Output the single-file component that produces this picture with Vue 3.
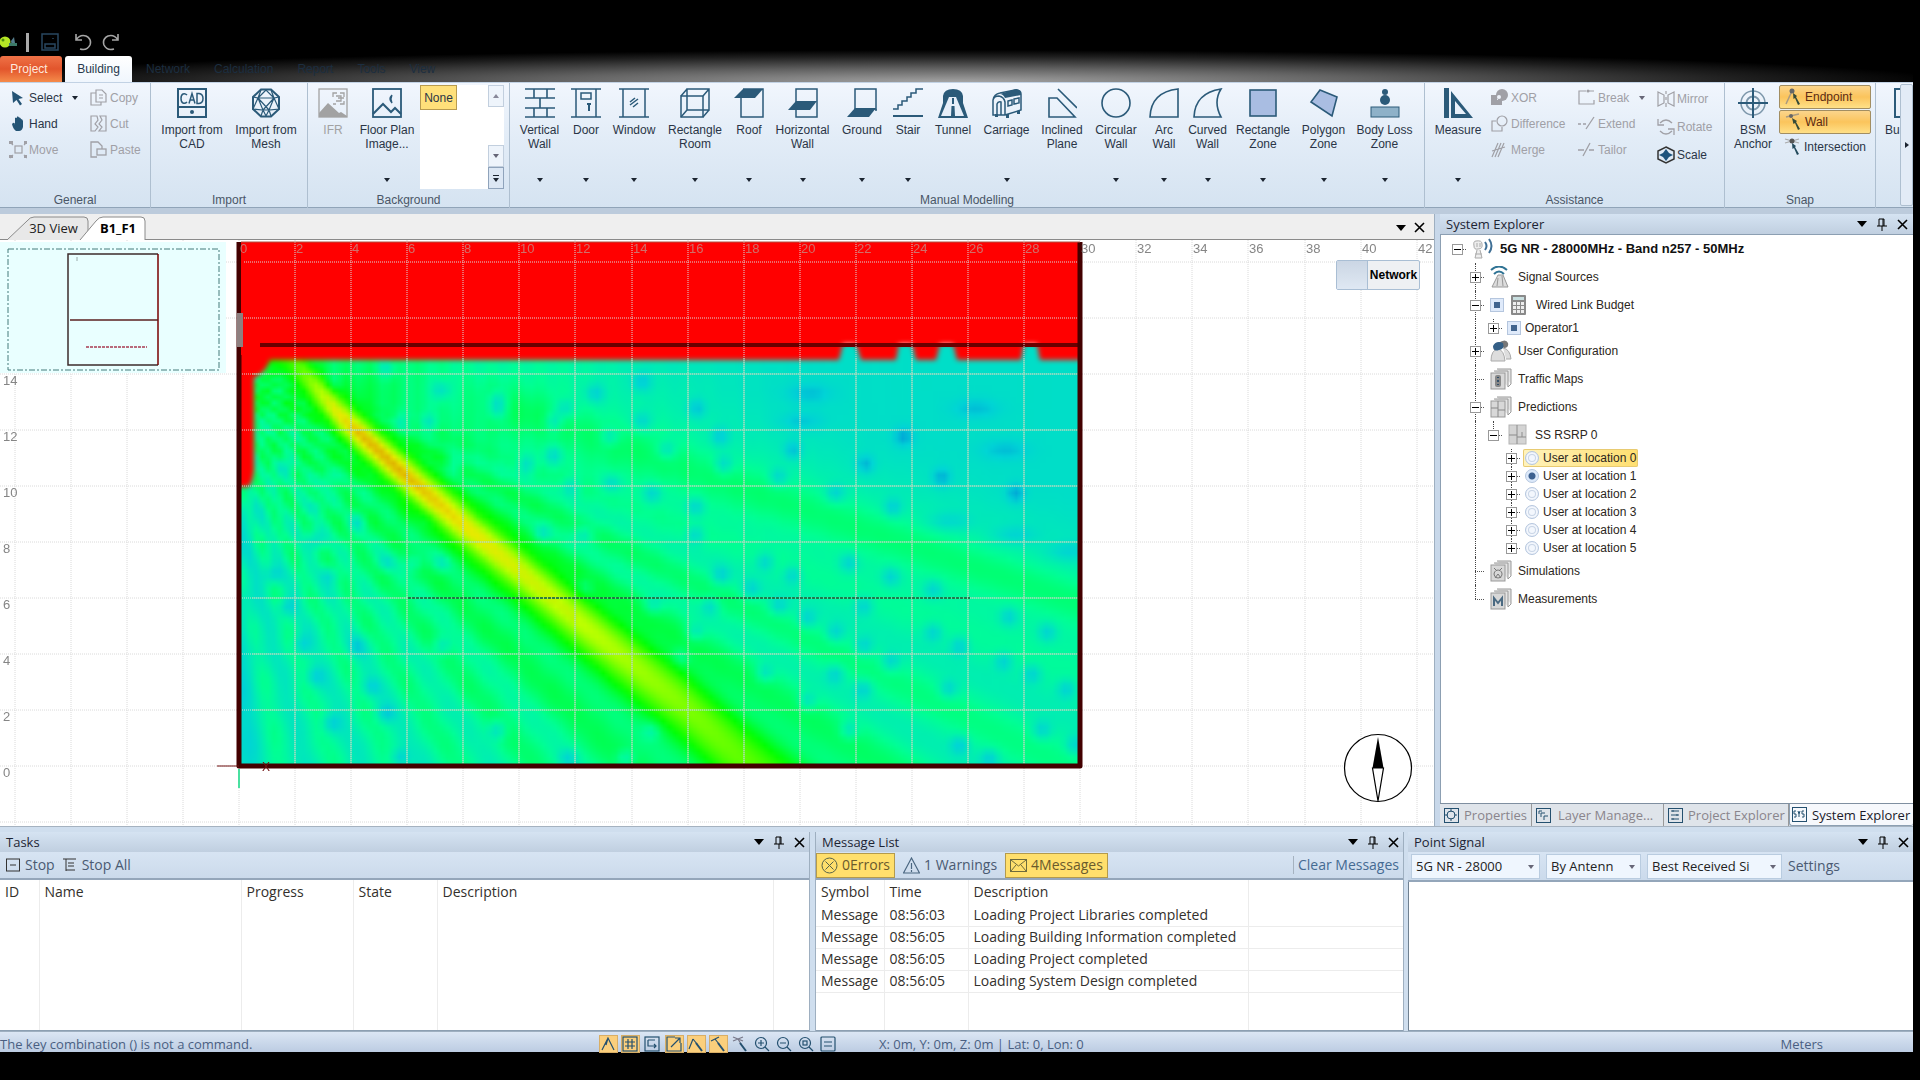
<script setup>
import { ref, onMounted } from 'vue'

const S = (inner, w = 1.5) => `<g fill="none" stroke="currentColor" stroke-width="${w}">${inner}</g>`

/* 30 x 30 ribbon icons */
const big = {
  cad: S('<rect x="1" y="1" width="28" height="28" stroke-width="2"/><path d="M1 19H29" stroke-width="2"/><path d="M10 7Q8 5 6 6Q4 7 4 10.500Q4 14 6 15Q8 16 10 14M12 15.500L15 5.500L18 15.500M13 12H17M20 5.500V15.500H22Q26 15 26 10.500Q26 6 22 5.500Z"/>') + '<circle cx="15" cy="24" r="2" fill="currentColor"/>',
  mesh: S('<path d="M10 1.500H20L28 9V21L20 28.500H10L2 21V9Z" stroke-width="2"/><path d="M15 2L7 10L23 10ZM7 10L2 21L12 22L7 10M23 10L28 21L18 22L23 10M7 10L18 22H12L23 10M12 22L10 28M18 22L20 28M12 22L15 28L18 22M2 9L7 10L10 2M28 9L23 10L20 2" stroke-width="1.200"/>'),
  ifr: S('<rect x="1" y="1" width="28" height="28"/><path d="M15 9V5H19M22 5H26V9M26 13V16H22M18 16H15M18 8H23V13H18M20 10H26"/>', 1.3) + '<path d="M1 29V25L10 15L21 25L23 24L29 28V29Z" fill="currentColor"/>',
  plan: S('<rect x="1" y="1" width="28" height="28" stroke-width="1.800"/><path d="M1 26L11 16L19 24L23 20L29 26" stroke-width="2"/><path d="M20 7Q16 11 20 15Q18 11 20 7" stroke-width="1.300"/>'),
  vwall: S('<path d="M0 1H30M0 10H30M0 20H30M0 29H30M9 1V10M22 1V10M15 10V20M9 20V29M22 20V29" stroke-width="1.600"/>'),
  door: S('<path d="M0 1H30M0 29H30M5 1V29M25 1V29"/><rect x="10" y="5" width="10" height="6"/><path d="M16 16H20M18 16V23" stroke-width="2"/>'),
  window: S('<path d="M0 1H30M0 29H30M4 1V29M26 1V29M11 17L19 11M11 14L16 10M14 19L19 15"/>'),
  room: S('<rect x="1" y="8" width="22" height="21"/><path d="M7 1H29V22H7ZM1 8L7 1M23 8L29 1M1 29L7 22M23 29L29 22"/>'),
  roof: S('<path d="M7 8V29H29V1H9"/>') + '<path d="M9 1H29L21 10H0Z" fill="currentColor"/>',
  hwall: S('<rect x="8" y="1" width="21" height="28"/>') + '<path d="M8 13H29L22 22H0Z" fill="currentColor"/>',
  ground: S('<rect x="8" y="1" width="21" height="20"/><path d="M29 21V23"/>') + '<path d="M8 20H29L22 29H0Z" fill="currentColor"/>',
  stair: S('<path d="M0 21H5V17H9V13H14V9H18V5H23V1H30"/><path d="M0 28H30" stroke-width="2"/>'),
  tunnel: '<path d="M5 15V8Q6 1 15 1Q24 1 25 8V15L30 30H0Z" fill="currentColor"/><path d="M11 9H18L26 28H3Z" fill="#e6eef8"/><path d="M14 10H16V16H14ZM13.500 18H16.500L17 28H13Z" fill="currentColor"/>',
  carriage: S('<path d="M1 27V12Q2 8 7 8Q12 9 13 14V27ZM1 12Q2 6 8 5L23 2Q29 2 29 6V22L13 27M5 27V16Q6 13 9 14V27M16 13L20 12V17L16 18ZM22 11L27 10V15L22 16Z"/>') + '<path d="M8 6L24 1Q29 1 29 7L13 10Q11 6 8 6ZM3 26H6V29H3ZM14 26H17V30H14ZM25 23H28V26H25Z" fill="currentColor"/>',
  inclined: S('<path d="M2 10H10L28 29H2ZM11 1L30 20"/>', 1.6),
  circle: S('<circle cx="15" cy="15" r="14"/>', 1.6),
  arc: S('<path d="M29 1V29H1Q2 4 29 1Z"/>', 1.6),
  curved: S('<path d="M28 1Q20 14 28 29H1Q2 5 28 1Z"/>', 1.6),
  rect: '<rect x="2" y="2" width="26" height="26" fill="#a9bde2" stroke="currentColor" stroke-width="1.600"/>',
  polygon: '<path d="M11 2L28 9L23 28L2 14Z" fill="#a9bde2" stroke="currentColor" stroke-width="1.600"/>',
  body: '<circle cx="15" cy="4" r="3" fill="currentColor"/><circle cx="15" cy="12" r="5" fill="currentColor"/><rect x="1" y="19" width="28" height="10" fill="#8eb1c8" stroke="currentColor"/>',
  measure: '<rect x="1" y="0" width="5" height="30" fill="currentColor"/><path fill-rule="evenodd" d="M8 3L30 30H8ZM12 13V26H23Z" fill="currentColor"/>',
  bsm: S('<circle cx="15" cy="15" r="12" stroke="#7d97ab"/><circle cx="15" cy="15" r="6.500" stroke="#7d97ab" stroke-width="2"/><path d="M15 0V30M0 15H30" stroke-width="2"/>'),
  building: S('<path d="M16 1H2V29H16M8 10H11M8 23H11" stroke-width="2"/>')
}

/* 18 x 18 command icons */
const small = {
  select: '<path d="M3 2L14 9L9.500 10L13 15L11 16.500L7.500 11L4 14Z" fill="currentColor"/>',
  hand: '<path d="M4 8Q6 7 6 10V3Q7 2 8 3V1.500Q9.500 1 10 2.500Q11.500 2 12 4Q13.500 4 14 6V12Q13 16 10 16H7Q4 14 3 9Z" fill="currentColor"/>',
  move: S('<rect x="6" y="5" width="7" height="7"/><path d="M4 4L1 1M15 4L18 1M4 14L1 17M15 14L18 17"/>', 1.2) + '<path d="M0 0H4V3H0ZM15 0H18V3H15ZM0 14H4V17H0ZM15 14H18V17H15Z" fill="currentColor"/>',
  copy: S('<path d="M6 3V1H12L16 5V13H6ZM9 6H13M9 9H13M6 4H1V16H11V13"/>', 1.2),
  cut: S('<path d="M7 1H1V16H5L8 12L5 9L8 5ZM10 1H16V16H9L12 12L9 9L12 5Z"/>', 1.2),
  paste: S('<path d="M7 16H1V1H8L12 5V8"/><rect x="7" y="8" width="9" height="6"/>', 1.3),
  xor: '<circle cx="11" cy="6" r="6" fill="currentColor"/><path d="M0 6H6V11H11V16H0Z" fill="currentColor"/><circle cx="8" cy="8" r="2" fill="#eef3fb"/>',
  diff: S('<path d="M5 6H1V16H11V12"/><circle cx="11" cy="6" r="5"/>', 1.2),
  merge: S('<path d="M1 16L7 2M4 16L10 2M7 16L13 2M1 10L14 6" stroke-width="1.200"/>'),
  break: S('<path d="M8 2H1V15H16V11M11 2H16"/>', 1.2) + '<circle cx="10" cy="2" r="1.500" fill="currentColor"/>',
  extend: S('<path d="M0 9H3M5 9H8M8 14L16 2"/>', 1.3),
  tailor: S('<path d="M0 9H6M5 15L12 2M11 9H16"/>', 1.3),
  mirror: S('<path d="M1 2L7 5V13L1 16ZM17 2L11 5V13L17 16ZM9 1V4M9 7V10M9 13V17" stroke-width="1.200"/>'),
  rotate: S('<path d="M15 5Q9 -1 3 5M1 1V7H7M3 13Q9 19 15 13M17 17V11H11" stroke-width="1.300"/>'),
  scale: S('<path d="M9 1L17 5V13L9 17L1 13V5Z" stroke="#333"/>') + '<path d="M9 3L12 7L16 9L12 11L9 15L6 11L2 9L6 7Z" fill="#1d537d"/>',
  endpoint: '<path d="M7 3L1 16" stroke="#a99a80" stroke-width="1.500"/><circle cx="7" cy="3" r="2.500" fill="#666"/><path d="M8 5L12 8L11 9L15 16L13 17L10 10L8.500 11Z" fill="#354a38"/>',
  wall: '<path d="M1 4L14 1" stroke="#a99a80" stroke-width="1.500"/><circle cx="6" cy="3" r="2" fill="#666"/><path d="M7 5L12 8L11 9L15 16L13 17L10 10L8.500 11Z" fill="#354a38"/>',
  inter: '<path d="M1 5L15 1M1 1L15 5" stroke="#aaa" stroke-width="1.300"/><circle cx="8" cy="3" r="2.500" fill="#555"/><path d="M8 5L12 8L11 9L15 16L13 17L10 10L8.500 11Z" fill="#234a5c"/>'
}

const modelling = [
  ['vwall', 'Vertical Wall', 1], ['door', 'Door', 1], ['window', 'Window', 1], ['room', 'Rectangle Room', 1],
  ['roof', 'Roof', 1], ['hwall', 'Horizontal Wall', 1], ['ground', 'Ground', 1], ['stair', 'Stair', 1],
  ['tunnel', 'Tunnel', 0], ['carriage', 'Carriage', 1], ['inclined', 'Inclined Plane', 0], ['circle', 'Circular Wall', 1],
  ['arc', 'Arc Wall', 1], ['curved', 'Curved Wall', 1], ['rect', 'Rectangle Zone', 1], ['polygon', 'Polygon Zone', 1],
  ['body', 'Body Loss Zone', 1]
]

/* 22 x 22 tree icons */
const sheet = '<path d="M7 1H21V16M4 3H18V19M18 19L21 16" fill="#e4e4e4" stroke="#999"/><rect x="1" y="5" width="14" height="16" fill="#d8d8d8" stroke="#999"/>'
const treeIcons = {
  net: '<path d="M4 3Q1 3 2 8Q2 12 6 11Q11 11 10 6Q10 2 4 3ZM5 5V9M8 5V9M5 12L3 20H10L8 12M3 16H10" fill="#eee" stroke="#aaa"/><path d="M13 4Q16 8 13 12M17 1Q22 8 17 15" fill="none" stroke="#3f6f95" stroke-width="2"/>',
  signal: '<path d="M8 9L2 21H18L13 9Z" fill="#ddd" stroke="#999"/><path d="M12 10L13 20M8 12L7 20" stroke="#999"/><path d="M1 4Q9 -3 17 4M4 8Q9 3 14 8" fill="none" stroke="#2f7394" stroke-width="2"/>',
  calc: '<rect x="2" y="1" width="15" height="20" rx="1" fill="#8a8a8a"/><rect x="4" y="3" width="11" height="3" fill="#c9dfe0"/><path d="M4 8H7V11H4ZM8 8H11V11H8ZM12 8H15V11H12ZM4 12H7V15H4ZM8 12H11V15H8ZM12 12H15V15H12ZM4 16H7V19H4ZM8 16H11V19H8ZM12 16H15V19H12Z" fill="#eee"/>',
  user: '<path d="M1 21Q1 10 8 9Q14 10 15 21ZM13 8Q20 9 21 19H16" fill="#ddd" stroke="#aaa"/><path d="M8 3Q16 -2 18 3Q19 8 14 8Z" fill="#777"/><path d="M3 6Q6 0 13 3Q15 9 9 10Q3 12 3 6Z" fill="#345f86"/>',
  traffic: sheet + '<rect x="5" y="7" width="6" height="12" rx="2" fill="#888"/><path d="M8 9V10M8 12V14M8 16V17" stroke="#334f68" stroke-width="2"/>',
  pred: sheet + '<path d="M8 5V12H1M8 14H15M8 12V21" fill="none" stroke="#888"/>',
  ss: '<rect x="1" y="1" width="17" height="19" fill="#d4d4d4" stroke="#b4b4b4"/><path d="M9 1V20M1 11H9M9 13H18M14 13V8" stroke="#8c8c8c" fill="none"/>',
  sim: sheet + '<path d="M4 8L7 11M12 8L9 11M8 10A4 4 0 1 0 8.100 10M8 14L5 18M8 14L11 18" fill="none" stroke="#777"/>',
  meas: sheet + '<path d="M4 18V10L8 15L12 10V18" fill="none" stroke="#4b6a82" stroke-width="2"/>'
}

/* l: depth; own: connector line above (u) and below (d) the node */
const tree = [
  { l: 0, box: '-', icon: 'net', text: '5G NR - 28000MHz - Band n257 - 50MHz', bold: true, own: '' },
  { l: 1, box: '+', icon: 'signal', text: 'Signal Sources', own: 'ud' },
  { l: 1, box: '-', check: true, icon: 'calc', text: 'Wired Link Budget', own: 'ud' },
  { l: 2, box: '+', check: true, text: 'Operator1', own: 'u', tight: true },
  { l: 1, box: '+', icon: 'user', text: 'User Configuration', own: 'ud' },
  { l: 1, icon: 'traffic', text: 'Traffic Maps', own: 'ud' },
  { l: 1, box: '-', icon: 'pred', text: 'Predictions', own: 'ud' },
  { l: 2, box: '-', icon: 'ss', text: 'SS RSRP 0', own: 'u' },
  ...[0, 1, 2, 3, 4, 5].map(n => ({ l: 3, box: '+', radio: n, text: `User at location ${n}`, own: n < 5 ? 'ud' : 'u', tight: true })),
  { l: 1, icon: 'sim', text: 'Simulations', own: 'ud' },
  { l: 1, icon: 'meas', text: 'Measurements', own: 'u' }
]
const shownLocation = ref(1)

const dockTabs = [
  ['Properties', '<circle cx="7" cy="7" r="4"/><path d="M7 1V4M7 10V13M1 7H4M10 7H13"/>'],
  ['Layer Manage...', '<path d="M3 6V3H6M5 9V5H9M8 12V8H12"/>'],
  ['Project Explorer', '<path d="M3 3H11M3 7H11M3 11H11M5 2V4M9 6V8M5 10V12"/>'],
  ['System Explorer', '<path d="M4 4H2V7H4V10H2M6 4L7 7L8 4M7 7V10M12 4H10V7H12V10H10"/>']
]

const messages = [
  ['08:56:03', 'Loading Project Libraries completed'],
  ['08:56:05', 'Loading Building Information completed'],
  ['08:56:05', 'Loading Project completed'],
  ['08:56:05', 'Loading System Design completed']
]

/* 16 x 16 status icons */
const statusIcons = [
  ['Angle snap', true, '<path d="M2 14L8 2L14 14M8 2L6 9" />'],
  ['Grid', true, '<rect x="1" y="1" width="14" height="14"/><path d="M6 3V13M10 3V13M3 6H13M3 10H13"/>'],
  ['Frame', false, '<rect x="1" y="1" width="14" height="14"/><path d="M4 4H11M4 4V10H12M10 8L12 10L10 12"/>'],
  ['Zoom window', true, '<path d="M9 1H1V15H15V7M5 11L14 2M9 2H14V7"/>'],
  ['Endpoint snap', true, '<path d="M1 13L5 3M5 3L9 8"/><path d="M8 7L14 15" stroke-width="2"/>'],
  ['Wall snap', true, '<path d="M1 5L9 1M5 3L9 8"/><path d="M8 7L14 15" stroke-width="2"/>'],
  ['Intersection snap', false, '<path d="M1 1L11 5M1 5L11 1M6 3L9 8" stroke="#778"/><path d="M8 7L14 15" stroke-width="2"/>'],
  ['Zoom in', false, '<circle cx="7" cy="7" r="5.500"/><path d="M11 11L15 15M4 7H10M7 4V10"/>'],
  ['Zoom out', false, '<circle cx="7" cy="7" r="5.500"/><path d="M11 11L15 15M4 7H10"/>'],
  ['Zoom fit', false, '<circle cx="7" cy="7" r="5.500"/><rect x="5" y="5" width="4" height="4"/><path d="M11 11L15 15"/>'],
  ['Legend', false, '<rect x="1" y="1" width="14" height="14" rx="1"/><path d="M4 6H12M4 10H12"/>']
]

/* plan view: 28 px per metre, origin at the lower left corner of the building */
const ORIGIN_X = 239
const ORIGIN_Y = 526
const STEP = 56
const columns = Array.from({ length: 26 }, (_, i) => (i - 4) * 2)
const rows = Array.from({ length: 11 }, (_, i) => (i - 1) * 2)
const gx = m => ORIGIN_X + Math.round(m * 28.04)
const gy = m => ORIGIN_Y - (m / 2) * STEP

const heat = ref(null)
const beam = [[241, 325], [293, 362], [340, 416], [395, 466], [460, 522], [515, 567], [581, 623], [636, 667], [685, 706], [740, 757], [1079, 1040]]
const peak = [[241, 135], [285, 112], [310, 88], [335, 62], [360, 49], [400, 48], [450, 56], [520, 68], [600, 77], [700, 92], [760, 100], [1079, 120]]
const nulls = [
  [750, 125], [1055, 160, 2], [1360, 205, 2], [850, 205], [665, 160], [610, 205], [590, 245], [487, 180], [487, 210], [310, 245], [1040, 245, 2],
  [750, 245], [693, 290], [893, 290], [1228, 290], [795, 330], [1025, 330], [1413, 330, 2], [900, 373], [1158, 373], [1000, 412], [1297, 412],
  [1103, 460], [1432, 460], [1208, 503], [1310, 545, 2], [1430, 585, 2], [1530, 635, 2], [181, 412], [848, 500], [567, 583], [645, 583], [848, 583],
  [232, 545], [410, 375], [540, 375], [105, 375], [285, 668], [336, 668], [387, 668], [181, 705], [1205, 710], [1128, 668], [975, 665], [895, 705],
  [1025, 705], [1282, 748], [950, 748], [875, 797], [1000, 797], [1155, 797], [1052, 835], [1103, 877], [1282, 877], [1490, 877], [1155, 918],
  [848, 877], [1330, 918], [1205, 965], [1103, 1002], [1462, 1002], [1155, 1047], [1052, 1083], [1525, 1047], [1128, 1170], [1330, 1215], [1385, 1255],
  [1480, 1170], [770, 1170], [720, 1255], [615, 1255], [487, 1170], [310, 1255], [285, 1120], [258, 1040], [232, 918], [130, 915], [80, 705],
  [105, 800], [155, 1010], [185, 1150], [387, 918], [1540, 1215], [1410, 965], [1420, 830], [1310, 1047], [820, 955], [770, 797], [645, 745], [975, 1000],
  [185, 130], [285, 85], [385, 150], [590, 345], [620, 440], [695, 430], [770, 460], [155, 500], [155, 600], [360, 250], [360, 540], [450, 540]
].map(([x, y, wide]) => [230 + x * 0.5485, 340 + y / 3, wide ? 22 : 9])

function along(points, x) {
  for (let i = 1; i < points.length; i++) {
    if (x <= points[i][0]) {
      const [x0, y0] = points[i - 1]
      const [x1, y1] = points[i]
      return y0 + ((y1 - y0) * (x - x0)) / (x1 - x0)
    }
  }
  return points[points.length - 1][1]
}
const ease = t => { const c = Math.max(0, Math.min(1, t)); return c * c * (3 - 2 * c) }

function hueAt(x, y) {
  const d = (y - along(beam, x)) * 0.77
  const r = Math.hypot(x - 250, y - 350)
  const a = Math.abs(d)
  let h
  if (d > 0) {
    const th = Math.atan2(y - 350, x - 195)
    h = 129 + 29 * (1 - Math.exp(-a / 75)) + 4 * ease((620 - x - (760 - y) * 0.4) / 320) * ease((a - 60) / 120)
    h += 8 * Math.cos(52 * th + 1) * ease(a / 30)
  } else {
    const th = Math.atan2(y - 352, x - 225)
    h = 127 + 33 * (1 - Math.exp(-a / 62))
    h += 14 * ease((x - 440) / 420) * ease((590 - y + (x - 1000) * 0.35) / 130)
    h += 8 * Math.cos(62 * th) * ease(a / 40) * ease((th - 0.28) / 0.2)
    h -= 13 * Math.exp(-(((y - 425 - (x - 560) * 0.34) / 24) ** 2)) * ease((x - 420) / 120)
  }
  h += 14 * Math.cos(r / 9 + x / 26) * Math.cos(x / 9 - y / 40) * Math.exp(-r / 190)
  h += 10 * Math.exp(-((x - 241) ** 2) / 400) * ease((y - 470) / 40)
  for (const [nx, ny, w] of nulls) {
    h += (w > 9 ? 13 : 20) * Math.exp(-((x - nx) ** 2) / (w * w) - ((y - ny) ** 2) / 85)
  }
  const halo = 0.9 * Math.exp(-((d / (15 + r * 0.025)) ** 2))
  h = h * (1 - halo) + 116 * halo
  const core = Math.exp(-((d / (10 + r * 0.018)) ** 2))
  return h * (1 - core) + along(peak, x) * core
}

onMounted(() => {
  const c = heat.value
  const ctx = c.getContext('2d')
  for (let j = 0; j < c.height; j++) {
    for (let i = 0; i < c.width; i++) {
      const h = Math.max(46, Math.min(194, hueAt(241 + ((i + 0.5) * 838) / c.width, 346 + ((j + 0.5) * 420) / c.height)))
      const l = h > 155 ? 50 - Math.min(8, (h - 155) * 0.34) : h < 75 ? 43 + (h - 46) * 0.2 : 50
      ctx.fillStyle = `hsl(${h} 100% ${l}%)`
      ctx.fillRect(i, j, 1, 1)
    }
  }
})
</script>

<template>
  <div class="app">
    <header class="title">
      <div class="quick">
        <svg class="logo" width="18" height="14" viewBox="0 0 18 14"><circle cx="5" cy="7" r="5.500" fill="#b6e625" /><circle cx="3" cy="5" r="1.500" fill="#4f8f10" /><path d="M11 6L14 2L15 8L12 11Z" fill="#557d8c" /><path d="M9 8H17V11H9Z" fill="#3c7a68" /></svg>
        <span class="divider"></span>
        <button aria-label="Save"><svg width="18" height="18" viewBox="0 0 18 18" fill="none" stroke="#294760" stroke-width="1.500"><rect x="1" y="1" width="16" height="16" /><path d="M4 11H14V15H4ZM12 5V6" /></svg></button>
        <button aria-label="Undo"><svg width="18" height="18" viewBox="0 0 18 18" fill="none" stroke="#a5a5a5" stroke-width="1.600"><path d="M2 1V7H8M2 7Q6 1 12 3Q18 6 16 12Q13 18 6 16" /></svg></button>
        <button aria-label="Redo"><svg width="18" height="18" viewBox="0 0 18 18" fill="none" stroke="#a5a5a5" stroke-width="1.600"><path d="M16 1V7H10M16 7Q12 1 6 3Q0 6 2 12Q5 18 12 16" /></svg></button>
      </div>
      <nav class="tabs">
        <button class="project">Project</button>
        <button class="current">Building</button>
        <button class="ghost">Network</button>
        <button class="ghost">Calculation</button>
        <button class="ghost">Report</button>
        <button class="ghost">Tools</button>
        <button class="ghost">View</button>
      </nav>
    </header>

    <section class="ribbon">
      <div class="group general">
        <div class="tools">
          <div class="stack">
            <button class="cmd"><svg width="18" height="18" v-html="small.select" />Select<i class="caret"></i></button>
            <button class="cmd"><svg width="18" height="18" v-html="small.hand" />Hand</button>
            <button class="cmd" disabled><svg width="18" height="18" v-html="small.move" />Move</button>
          </div>
          <div class="stack">
            <button class="cmd" disabled><svg width="18" height="18" v-html="small.copy" />Copy</button>
            <button class="cmd" disabled><svg width="18" height="18" v-html="small.cut" />Cut</button>
            <button class="cmd" disabled><svg width="18" height="18" v-html="small.paste" />Paste</button>
          </div>
        </div>
        <h2>General</h2>
      </div>

      <div class="group import">
        <div class="tools">
          <button class="tool"><svg width="30" height="30" v-html="big.cad" /><span>Import from CAD</span></button>
          <button class="tool"><svg width="30" height="30" v-html="big.mesh" /><span>Import from Mesh</span></button>
        </div>
        <h2>Import</h2>
      </div>

      <div class="group background">
        <div class="tools">
          <button class="tool ifr" disabled><svg width="30" height="30" v-html="big.ifr" /><span>IFR</span></button>
          <button class="tool plan"><svg width="30" height="30" v-html="big.plan" /><span>Floor Plan Image...</span><i class="caret"></i></button>
          <div class="gallery">
            <button class="none">None</button>
            <div class="scroller">
              <button aria-label="Scroll up"><i class="caret up"></i></button>
              <span></span>
              <button aria-label="Scroll down"><i class="caret dim"></i></button>
              <button aria-label="More" class="more"><i class="rule"></i><i class="caret"></i></button>
            </div>
          </div>
        </div>
        <h2>Background</h2>
      </div>

      <div class="group modelling">
        <div class="tools">
          <button v-for="[icon, text, menu] in modelling" :key="icon" class="tool">
            <svg width="30" height="30" v-html="big[icon]" /><span>{{ text }}</span><i v-if="menu" class="caret"></i>
          </button>
        </div>
        <h2>Manual Modelling</h2>
      </div>

      <div class="group assistance">
        <div class="tools">
          <button class="tool"><svg width="30" height="30" v-html="big.measure" /><span>Measure</span><i class="caret"></i></button>
          <div class="stack">
            <button class="cmd" disabled><svg width="18" height="18" v-html="small.xor" />XOR</button>
            <button class="cmd" disabled><svg width="18" height="18" v-html="small.diff" />Difference</button>
            <button class="cmd" disabled><svg width="18" height="18" v-html="small.merge" />Merge</button>
          </div>
          <div class="stack">
            <button class="cmd" disabled><svg width="18" height="18" v-html="small.break" />Break<i class="caret dim"></i></button>
            <button class="cmd" disabled><svg width="18" height="18" v-html="small.extend" />Extend</button>
            <button class="cmd" disabled><svg width="18" height="18" v-html="small.tailor" />Tailor</button>
          </div>
          <div class="stack tall">
            <button class="cmd" disabled><svg width="18" height="18" v-html="small.mirror" />Mirror</button>
            <button class="cmd" disabled><svg width="18" height="18" v-html="small.rotate" />Rotate</button>
            <button class="cmd"><svg width="18" height="18" v-html="small.scale" />Scale</button>
          </div>
        </div>
        <h2>Assistance</h2>
      </div>

      <div class="group snap">
        <div class="tools">
          <button class="tool"><svg width="30" height="30" v-html="big.bsm" /><span>BSM Anchor</span></button>
          <div class="snaps">
            <button class="cmd on"><svg width="18" height="18" v-html="small.endpoint" />Endpoint</button>
            <button class="cmd on"><svg width="18" height="18" v-html="small.wall" />Wall</button>
            <button class="cmd"><svg width="18" height="18" v-html="small.inter" />Intersection</button>
          </div>
        </div>
        <h2>Snap</h2>
      </div>

      <div class="group rest">
        <button class="tool"><svg width="16" height="30" v-html="big.building" /><span>Bu</span></button>
      </div>
      <button class="next" aria-label="Scroll ribbon"><i></i></button>
    </section>

    <main class="work">
      <section class="document">
        <div class="doctabs">
          <button class="doctab"><svg width="84" height="24"><path d="M1 24L21 5Q24 1 28 1H78Q82 1 82 5V24" fill="#e8e8e8" stroke="#8a8a8a" /></svg><span>3D View</span></button>
          <button class="doctab active"><svg width="68" height="24"><path d="M1 24L17 5Q20 1 24 1H62Q66 1 66 5V24" fill="#fff" stroke="#8a8a8a" /></svg><span>B1_F1</span></button>
          <div class="doctools">
            <button aria-label="Document list"><i class="arrow"></i></button>
            <button aria-label="Close document"><svg width="11" height="11"><path d="M1 1L10 10M10 1L1 10" stroke="#000" stroke-width="1.600" /></svg></button>
          </div>
        </div>
        <div class="viewport">
          <canvas ref="heat" class="heat" width="140" height="70"></canvas>
          <svg class="plan-view">
            <defs><filter id="soft" x="-5%" y="-5%" width="110%" height="110%"><feGaussianBlur stdDeviation="2.500" /></filter><clipPath id="inside"><rect x="239" y="2" width="841" height="524" /></clipPath></defs>
            <g clip-path="url(#inside)">
              <path filter="url(#soft)" fill="#f00" d="M220 -10H1090V120H1040L1037 104H1024L1021 120H957L953 104H940L936 120H916L912 104H899L896 120H861L856 104H843L839 120H270Q266 132 254 138V230Q252 247 247 247H220Z" />
              <path d="M260 105H1080" stroke="#6b0000" stroke-width="4" />
            </g>
            <g class="grid">
              <path v-for="m in columns" :key="'c' + m" :d="`M${gx(m)} 0V600`" />
              <path v-for="m in rows" :key="'r' + m" :d="`M0 ${gy(m)}H2400`" />
            </g>
            <g class="grid inner" clip-path="url(#inside)">
              <path v-for="m in columns" :key="'ic' + m" :d="`M${gx(m)} 118V526`" />
              <path v-for="m in rows.slice(0, 9)" :key="'ir' + m" :d="`M252 ${gy(m)}H1080`" />
            </g>
            <path d="M239 2V526H1080V2" fill="none" stroke="#430000" stroke-width="5" stroke-linejoin="round" />
            <path d="M242 2V115" stroke="#f00" stroke-width="2" />
            <path d="M241 2H1080" stroke="#b05040" />
            <rect x="237" y="73" width="6" height="34" fill="#8e8080" />
            <path d="M408 358H970" stroke="#0a5a30" stroke-width="1.500" stroke-dasharray="3 1" />
            <path d="M217 526H239" stroke="#701010" />
            <path d="M239 529V548" stroke="#4ae0a0" stroke-width="2" />
            <text x="262" y="531" class="axis">X</text>
            <g class="scale">
              <text v-for="m in columns.slice(4)" :key="'x' + m" :x="gx(m) + 1" y="13" :class="{ over: m < 30 }">{{ m }}</text>
              <text v-for="m in rows.slice(1, 9)" :key="'y' + m" x="3" :y="gy(m) + 11">{{ m }}</text>
            </g>
            <g class="overview">
              <rect x="0" y="2" width="226" height="131" fill="#e9ffff" />
              <rect x="8" y="9" width="211" height="121" fill="none" stroke="#457a7a" stroke-dasharray="6 2 2 2" />
              <path d="M158 14H68V125H158" fill="none" stroke="#3c2c2c" stroke-width="1.500" />
              <path d="M158 14V125" stroke="#780000" stroke-width="1.500" />
              <path d="M70 80H158" stroke="#5a2020" stroke-width="1.500" />
              <path d="M86 107H147" stroke="#a83b52" stroke-width="1.500" stroke-dasharray="3 1" />
              <path d="M77 17V21" stroke="#9aa" />
            </g>
          </svg>
          <label class="network"><input type="checkbox" /><span>Network</span></label>
          <svg class="compass" width="70" height="70"><circle cx="35" cy="35" r="33.500" fill="#fff" stroke="#000" stroke-width="1.200" /><path d="M35 4L29.500 35H40.500Z" fill="#000" /><path d="M29.500 35H40.500L35 68Z" fill="#fff" stroke="#000" stroke-width="1.200" /></svg>
        </div>
      </section>

      <aside class="pane explorer">
        <header><h3>System Explorer</h3><div class="win"><button aria-label="Options"><i class="arrow"></i></button><button aria-label="Pin"><svg width="10" height="13" fill="none" stroke="#000"><path d="M2 8V1H7V8M6 1V8M0 8H10M5 8V13" /></svg></button><button aria-label="Close"><svg width="11" height="11"><path d="M1 1L10 10M10 1L1 10" stroke="#000" stroke-width="1.600" /></svg></button></div></header>
        <div class="tree">
          <div v-for="n in tree" :key="n.text" class="node" :class="{ tight: n.tight }">
            <span v-for="k in n.l" :key="k" class="cell" :class="{ up: k === 2, down: k === 2 }"></span>
            <span class="cell own" :class="{ up: n.own.includes('u'), down: n.own.includes('d') }"><button v-if="n.box" class="box" :aria-label="`Toggle ${n.text}`"><svg width="9" height="9"><path :d="n.box === '+' ? 'M1 4.5H8M4.5 1V8' : 'M1 4.5H8'" stroke="#000" /></svg></button></span>
            <label class="item" :class="{ chosen: n.radio === 0, user: n.tight, deep: n.icon === 'ss' || n.check }">
              <input v-if="n.check" type="checkbox" checked />
              <input v-if="n.radio !== undefined" v-model="shownLocation" type="radio" name="location" :value="n.radio" />
              <svg v-if="n.icon" width="22" height="22" v-html="treeIcons[n.icon]" />
              <span :class="{ bold: n.bold }">{{ n.text }}</span>
            </label>
          </div>
        </div>
        <nav class="docktabs">
          <button v-for="[name, art] in dockTabs" :key="name" :class="{ active: name === 'System Explorer' }"><svg width="15" height="15" fill="none" stroke="#24506f"><rect x="0.5" y="0.5" width="14" height="14" /><g v-html="art" /></svg>{{ name }}</button>
        </nav>
      </aside>
    </main>

    <section class="bottom">
      <div class="pane tasks">
        <header><h3>Tasks</h3><div class="win"><button aria-label="Options"><i class="arrow"></i></button><button aria-label="Pin"><svg width="10" height="13" fill="none" stroke="#000"><path d="M2 8V1H7V8M6 1V8M0 8H10M5 8V13" /></svg></button><button aria-label="Close"><svg width="11" height="11"><path d="M1 1L10 10M10 1L1 10" stroke="#000" stroke-width="1.600" /></svg></button></div></header>
        <div class="bar">
          <button><svg width="14" height="14" fill="none" stroke="#333"><rect x="0.5" y="1" width="13" height="12" /><path d="M4 7H10" /></svg>Stop</button>
          <button><svg width="14" height="14" fill="none" stroke="#333"><path d="M0 1H13M3 1V13M5 5H11M5 8H11M3 12H12" /></svg>Stop All</button>
        </div>
        <div class="sheet">
          <table>
            <colgroup><col class="w-id" /><col class="w-name" /><col class="w-progress" /><col class="w-state" /><col class="w-text" /><col /></colgroup>
            <thead><tr><th>ID</th><th>Name</th><th>Progress</th><th>State</th><th>Description</th><th></th></tr></thead>
            <tbody><tr class="filler"><td v-for="n in 6" :key="n"></td></tr></tbody>
          </table>
        </div>
      </div>

      <div class="pane messages">
        <header><h3>Message List</h3><div class="win"><button aria-label="Options"><i class="arrow"></i></button><button aria-label="Pin"><svg width="10" height="13" fill="none" stroke="#000"><path d="M2 8V1H7V8M6 1V8M0 8H10M5 8V13" /></svg></button><button aria-label="Close"><svg width="11" height="11"><path d="M1 1L10 10M10 1L1 10" stroke="#000" stroke-width="1.600" /></svg></button></div></header>
        <div class="bar">
          <button class="on"><svg width="17" height="17" fill="none" stroke="#56634a"><circle cx="8.500" cy="8.500" r="7.500" /><path d="M4.500 4.500L12.500 12.500M12.500 4.500L4.500 12.500" /></svg>0Errors</button>
          <button><svg width="17" height="17" fill="none" stroke="#4a6680"><path d="M8.500 1L16.500 16H0.500ZM8.500 6V12M8.500 13V15" stroke-width="1.200" /></svg>1 Warnings</button>
          <button class="on"><svg width="17" height="17" fill="none" stroke="#6d6a3c"><rect x="0.500" y="2.500" width="16" height="12" /><path d="M1 3L8.500 9L16 3M1 14L6 8M16 14L11 8" /></svg>4Messages</button>
          <button class="clear">Clear Messages</button>
        </div>
        <div class="sheet">
          <table>
            <colgroup><col class="w-symbol" /><col class="w-time" /><col class="w-msg" /><col /></colgroup>
            <thead><tr><th>Symbol</th><th>Time</th><th>Description</th><th></th></tr></thead>
            <tbody>
              <tr v-for="m in messages" :key="m[1]"><td>Message</td><td>{{ m[0] }}</td><td>{{ m[1] }}</td><td></td></tr>
              <tr class="filler"><td v-for="n in 4" :key="n"></td></tr>
            </tbody>
          </table>
        </div>
      </div>

      <div class="pane point">
        <header><h3>Point Signal</h3><div class="win"><button aria-label="Options"><i class="arrow"></i></button><button aria-label="Pin"><svg width="10" height="13" fill="none" stroke="#000"><path d="M2 8V1H7V8M6 1V8M0 8H10M5 8V13" /></svg></button><button aria-label="Close"><svg width="11" height="11"><path d="M1 1L10 10M10 1L1 10" stroke="#000" stroke-width="1.600" /></svg></button></div></header>
        <div class="bar">
          <span class="pick system"><select aria-label="System"><option>5G NR - 28000</option></select><i class="caret dim"></i></span>
          <span class="pick by"><select aria-label="Group by"><option>By Antenn</option></select><i class="caret dim"></i></span>
          <span class="pick best"><select aria-label="Signal"><option>Best Received Si</option></select><i class="caret dim"></i></span>
          <button>Settings</button>
        </div>
        <div class="sheet"></div>
      </div>
    </section>

    <footer class="status">
      <span class="hint">The key combination () is not a command.</span>
      <div class="toggles">
        <button v-for="[name, on, art] in statusIcons" :key="name" :aria-label="name" :class="{ on }"><svg width="16" height="16" fill="none" stroke="#24506f" stroke-width="1.200" v-html="art" /></button>
      </div>
      <span class="coords">X: 0m, Y: 0m, Z: 0m | Lat: 0, Lon: 0</span>
      <span class="units">Meters</span>
    </footer>
  </div>
</template>

<style>
body { margin: 0; background: #000; }
</style>

<style scoped>
* { box-sizing: border-box; }
.app { display: flex; flex-direction: column; min-height: 100vh; padding: 0 7px 28px 0; background: #000; color: #2a3546; font: 12px/14px "Liberation Sans", Arial, sans-serif; overflow: hidden; }
button { margin: 0; padding: 0; border: 0; background: none; color: inherit; font: inherit; }
h2, h3 { margin: 0; font-weight: 400; font-size: inherit; }
svg { flex: none; display: block; }
.caret { width: 0; height: 0; border: 3px solid transparent; border-top: 4px solid #1b2430; border-bottom: 0; }
.caret.dim { border-top-color: #667; }
.caret.up { border-top: 0; border-bottom: 4px solid #889; }
.arrow { width: 0; height: 0; border: 5px solid transparent; border-top: 6px solid #000; border-bottom: 0; }

.title { height: 82px; display: flex; flex-direction: column; justify-content: flex-end; background: radial-gradient(ellipse 52% 32px at 50% 100%, #a4a4a4 0, #626262 42%, #1e1e1e 80%, #000 100%); }
.quick { display: flex; align-items: center; height: 28px; }
.logo { margin-right: 8px; }
.divider { width: 3px; height: 19px; background: #aaa; margin-right: 12px; }
.quick button + button { margin-left: 15px; }
.quick button:last-child { margin-left: 10px; }
.tabs { display: flex; height: 26px; font: 12px/26px "Liberation Sans", sans-serif; }
.project { width: 62px; padding-right: 4px; margin-right: 3px; border-radius: 3px 3px 0 0; background: linear-gradient(#ef7247, #e2552c 50%, #f58b4a); color: #ffe9dc; }
.current { width: 67px; margin-right: 14px; border-radius: 3px 3px 0 0; background: linear-gradient(#fff, #f0f6fd); color: #26384c; }
.ghost { margin-right: 24px; color: #1c2e40; }

.ribbon { display: flex; height: 132px; background: linear-gradient(#f1f6fd, #e2ecf7 45%, #d5e3f1); border-top: 1px solid #c2d2e4; border-bottom: 6px solid #bccbdc; box-shadow: inset 0 -1px #90a4b8; }
.group { display: flex; flex: none; flex-direction: column; border-right: 1px solid #aebfd0; }
.group h2 { margin-top: auto; height: 17px; text-align: center; line-height: 18px; color: #4a5666; }
.tools { display: flex; height: 105px; padding-top: 2px; }
.tool { display: flex; flex-direction: column; align-items: center; padding-top: 3px; }
.tool svg { color: #2b5a79; margin-bottom: 5px; }
.tool span { text-align: center; }
.tool .caret { margin: auto 0 6px; }
.tool:disabled, .tool:disabled svg { color: #a2a2a2; }
.stack { display: flex; flex-direction: column; }
.cmd { display: flex; align-items: center; gap: 2px; height: 26px; white-space: nowrap; }
.cmd svg { color: #245475; }
.cmd .caret { margin-left: 8px; }
.cmd:disabled, .cmd:disabled svg { color: #a0a0a6; }
.tall .cmd { height: 28px; }
.general { width: 151px; }
.general .tools { padding-left: 9px; }
.general .stack:first-child { width: 81px; }
.import { width: 157px; }
.import .tools { padding-left: 4px; }
.import .tool { width: 74px; }
.background { width: 202px; }
.background .ifr { width: 50px; }
.background .plan { width: 58px; }
.gallery { display: flex; width: 84px; height: 104px; margin-left: auto; margin-right: 5px; background: #fff; }
.none { width: 37px; height: 25px; border: 1px solid #b89b4f; background: #ffe07a; }
.scroller { display: flex; flex-direction: column; width: 16px; margin-left: auto; }
.scroller span { flex: 1; }
.scroller button { display: flex; flex-direction: column; align-items: center; justify-content: center; gap: 2px; height: 22px; border: 1px solid #c2cfde; background: #eef4fb; }
.scroller .more { border-color: #8fa3bb; background: #dce7f4; }
.rule { width: 6px; height: 1px; background: #1b2430; }
.modelling { width: 915px; }
.modelling .tools { display: grid; grid-template-columns: 45px 48px 48px 74px 34px 73px 46px 46px 44px 63px 48px 60px 36px 51px 60px 61px 61px; padding-left: 7px; }
.assistance { width: 300px; }
.assistance .tool { width: 66px; }
.assistance .stack:nth-child(2) { width: 87px; }
.assistance .stack:nth-child(3) { width: 79px; }
.snap { width: 151px; }
.snap .tool { width: 52px; margin-left: 2px; }
.snaps { display: flex; flex-direction: column; width: 92px; gap: 1px; }
.snaps .cmd { padding-left: 5px; height: 24px; }
.snaps .on { border: 1px solid #a28e62; border-radius: 2px; background: linear-gradient(#fbd58c, #fbc45c 50%, #ffe087); color: #5a2a14; }
.rest { flex: 1 1 0; width: 0; overflow: hidden; padding: 2px 0 0 9px; border: 0; }
.rest .tool { align-items: flex-start; }
.rest .tool svg { margin-left: 8px; }
.next { width: 13px; margin: 1px 0 2px; border: 1px solid #aebfd0; border-radius: 2px; background: #e2ebf6; }
.next i { display: block; width: 0; margin-left: 4px; border: 3px solid transparent; border-left: 4px solid #1b2430; border-right: 0; }

.work { display: flex; flex: 1 0 612px; background: #c8d8ea; }
.document { display: flex; flex-direction: column; flex: 1; min-width: 0; border-right: 1px solid #9eafc0; background: #efefef; font-family: "Open Sans", sans-serif; }
.doctabs { display: flex; height: 26px; padding-top: 2px; border-bottom: 1px solid #8a8a8a; }
.doctab { position: relative; height: 24px; width: 75px; margin-left: 6px; font-size: 13px; color: #222; }
.doctab svg { position: absolute; left: 0; top: 0; }
.doctab span { position: relative; left: 10px; line-height: 24px; }
.doctab.active { width: 68px; margin-left: -2px; font-weight: 700; color: #000; }
.doctab.active span { left: 5px; }
.doctools { display: flex; align-items: center; margin-left: auto; padding-right: 5px; }
.doctools button { display: flex; justify-content: center; width: 19px; }
.viewport { position: relative; flex: 1; overflow: hidden; background: #fff; }
.heat { position: absolute; left: 241px; top: 106px; width: 838px; height: 420px; }
.plan-view { position: absolute; inset: 0; width: 100%; height: 100%; }
.grid path { stroke: #dadada; stroke-dasharray: 1 1; fill: none; }
.grid.inner path { stroke: #a9d8b4; stroke-dasharray: none; stroke-opacity: .75; }
.scale text { font: 13px "Liberation Sans", sans-serif; fill: #858585; }
.scale .over { fill: #d0706a; }
.axis { font: 12px "Liberation Sans", sans-serif; fill: #701010; }
.network { position: absolute; top: 20px; right: 14px; display: flex; align-items: center; width: 84px; height: 30px; border: 1px solid #a9bed4; border-radius: 2px; background: #eef0f3; font: bold 12px "Liberation Sans", sans-serif; color: #000; }
.network input { appearance: none; width: 31px; height: 28px; margin: 0; border-right: 1px solid #a9bed4; background: linear-gradient(#cbd6e4, #dfe8f3); }
.network span { flex: 1; text-align: center; }
.compass { position: absolute; right: 21px; bottom: 23px; }

.pane { display: flex; flex-direction: column; min-width: 0; font: 13px/18px "Open Sans", sans-serif; color: #1d2433; }
.pane > header { display: flex; align-items: center; height: 20px; padding-left: 6px; background: linear-gradient(#d5e3f2, #c0cfe0); }
.win { display: flex; margin-left: auto; padding-right: 1px; }
.win button { display: flex; align-items: center; justify-content: center; width: 20px; height: 20px; }
.explorer { width: 473px; margin-left: 5px; background: #fff; }
.explorer > header { height: 21px; border-bottom: 1px solid #8c9fb2; }
.tree { flex: 1; padding: 0 0 0 7px; border-left: 1px solid #8c9fb2; font: 12px/16px "Liberation Sans", sans-serif; color: #2b2620; }
.node { display: flex; align-items: center; height: 28px; }
.node.tight { height: 18px; }
.cell { position: relative; display: flex; align-items: center; justify-content: center; width: 18px; height: 100%; }
.cell.up::before { content: ""; position: absolute; left: 9px; top: 0; height: 50%; border-left: 1px dotted #444; }
.cell.down::after { content: ""; position: absolute; left: 9px; top: 50%; height: 50%; border-left: 1px dotted #444; }
.own { background: repeating-linear-gradient(90deg, #555 0 1px, transparent 1px 2px) 9px 50% / 9px 1px no-repeat; }
.box { position: relative; z-index: 1; width: 11px; height: 11px; border: 1px solid #999; background: #fff; }
.item { display: flex; align-items: center; gap: 6px; padding-left: 6px; white-space: nowrap; }
.item input { appearance: none; width: 14px; height: 14px; margin: 0; border: 1px solid #b5c6de; background: #f3f7fd; }
.item input[type=checkbox]:checked { background: radial-gradient(#41648e, #41648e) center / 6px 6px no-repeat #dfeafa; }
.item input[type=radio] { border-radius: 50%; box-shadow: inset 0 0 0 2px #f3f7fd, inset 0 0 0 3px #c9d5e6; }
.item input[type=radio]:checked { background: radial-gradient(circle, #3d6190 0 3px, #dce9fa 4px); box-shadow: none; }
.item.deep { gap: 5px; }
.item.user { gap: 4px; height: 18px; margin-left: 3px; padding: 0 2px; }
.item.chosen { border-radius: 2px; background: linear-gradient(90deg, #fff3bd, #ffdf70); box-shadow: inset 0 0 0 1px #e8cb72; }
.bold { font-weight: 700; font-size: 13px; color: #111; }
.docktabs { display: flex; height: 23px; border-top: 1px solid #7f8fa0; background: #dfe4ea; }
.docktabs button { display: flex; align-items: center; gap: 5px; flex: none; width: 92px; padding: 0 0 0 4px; border-right: 1px solid #999; color: #8a858c; white-space: nowrap; }
.docktabs button:nth-child(2) { gap: 7px; width: 132px; }
.docktabs button:nth-child(3) { width: 125px; }
.docktabs .active { flex: 1; border: 1px solid #8c9fb2; border-width: 0 0 1px 1px; padding-left: 2px; border-radius: 0 0 3px 3px; background: #f6f8fc; color: #1a1a2a; }

.bottom { display: flex; flex: none; height: 205px; padding-top: 5px; background: #cfdeee; border-top: 1px solid #a5b2c0; }
.bottom .win { padding-right: 0; }
.bar { display: flex; align-items: center; height: 28px; padding-left: 6px; background: linear-gradient(#d7e4f3, #cbdaeb); border-bottom: 2px solid #94a6ba; color: #4a5a72; }
.bar button { display: flex; align-items: center; gap: 5px; height: 25px; font-size: 14px; white-space: nowrap; }
.sheet { flex: 1; background: #fff; border-bottom: 1px solid #8c9fb2; }
.tasks { flex: 0 1 810px; border-right: 1px solid #9eafc0; }
.tasks .bar button + button { margin-left: 8px; }
.messages { flex: 0 1 589px; margin-left: 5px; border-right: 1px solid #9eafc0; border-left: 1px solid #9eafc0; }
.messages .bar { padding-left: 0; }
.messages .bar button { padding: 0 4px; gap: 4px; }
.messages .bar .on { border: 1px solid #b39a4c; background: #ffdf6c; color: #6a5a2c; }
.messages .bar button:nth-child(2) { padding: 0 8px; }
.messages .bar .clear { margin-left: auto; padding: 0 4px; height: 18px; border-left: 1px solid #a5b2c0; color: #456a92; }
.point { flex: 1; margin-left: 4px; }
.point .bar { height: 30px; padding-left: 3px; gap: 6px; }
.point .sheet { border-left: 1px solid #6f8090; }
.pick { position: relative; display: flex; height: 25px; }
.pick select { width: 100%; appearance: none; padding: 0 4px; border: 1px solid #b9cce0; border-radius: 0; background: #eff6fe; color: #222; font: inherit; }
.pick .caret { position: absolute; right: 6px; top: 11px; }
.system { width: 129px; }
.by { width: 95px; }
.best { width: 135px; }
table { width: 100%; height: 100%; table-layout: fixed; border-collapse: collapse; font-size: 14px; }
th, td { height: 22px; padding: 0 0 0 5px; border-right: 1px solid #ececec; text-align: left; font-weight: 400; white-space: nowrap; color: #33302c; }
thead th { height: 24px; }
th:last-child, td:last-child { border-right: 0; }
.messages tbody tr { border-bottom: 1px solid #ececec; }
.messages tbody tr.filler { border-bottom: 0; }
.messages tbody tr:not(.filler) { height: 22px; }
.filler td { height: auto; }
.w-id { width: 39px; }
.w-name { width: 202px; }
.w-progress { width: 112px; }
.w-state { width: 84px; }
.w-text { width: 336px; }
.w-symbol { width: 68px; }
.w-time { width: 84px; }
.w-msg { width: 280px; }

.status { display: flex; align-items: center; flex: none; height: 21px; padding-top: 3px; background: linear-gradient(#dbe6f4, #bccce2); border-top: 1px solid #9eafc0; font: 13px/16px "Open Sans", sans-serif; color: #4a5f82; }
.hint { width: 599px; }
.toggles { display: flex; gap: 3px; width: 280px; }
.toggles button { width: 19px; height: 18px; padding: 1px; }
.toggles .on { background: #fbcf7c; box-shadow: inset 0 0 0 1px #d8ae66; }
.units { margin-left: auto; padding-right: 90px; }
</style>
